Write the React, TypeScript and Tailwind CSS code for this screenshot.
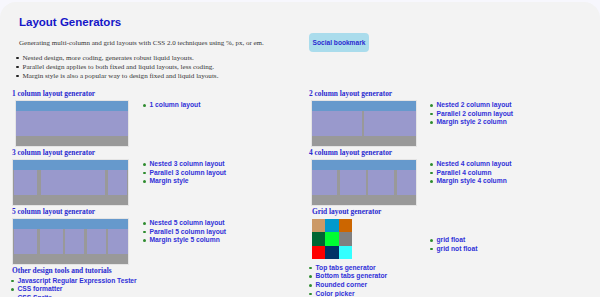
import React from 'react';

const serif = { fontFamily: '"Liberation Serif", "Times New Roman", serif' };
const sans = { fontFamily: '"Liberation Sans", Arial, sans-serif' };

const Bullet: React.FC = () => (
    <span className="inline-block w-[2.5px] h-[2.5px] rounded-full bg-[#2e8b2e] mr-[4px] shrink-0"></span>
);

const LinkList: React.FC<{ items: string[]; className?: string }> = ({ items, className }) => (
    <ul className={`text-[6.7px] font-bold text-[#3030d8] leading-[8.6px] ${className ?? ''}`} style={sans}>
        {items.map((t) => (
            <li key={t} className="flex items-center whitespace-nowrap">
                <Bullet />
                {t}
            </li>
        ))}
    </ul>
);

const Heading: React.FC<{ children: React.ReactNode; className?: string }> = ({ children, className }) => (
    <h3 className={`h-[8px] text-[7.4px] font-bold text-[#2a2ad0] leading-[8px] whitespace-nowrap ${className ?? ''}`} style={serif}>
        {children}
    </h3>
);

// preview of a layout: header, columns, footer
const Preview: React.FC<{ cols: string[]; className?: string }> = ({ cols, className }) => (
    <div className={`flex flex-col shrink-0 bg-[#999999] shadow-[0_0_0_1px_#e4e4e4] ${className ?? ''}`}>
        <div className="h-[10px] bg-[#6699cc]"></div>
        <div className="h-[25px] flex justify-between bg-[#999999]">
            {cols.map((c, i) => (
                <div key={i} className={`h-full bg-[#9999cc] ${c}`}></div>
            ))}
        </div>
        <div className="h-[10px] bg-[#999999]"></div>
    </div>
);

const gridColors = [
    'bg-[#cc9966]', 'bg-[#0099cc]', 'bg-[#cc6600]',
    'bg-[#006633]', 'bg-[#00ff33]', 'bg-[#808080]',
    'bg-[#ff0000]', 'bg-[#003366]', 'bg-[#33ffff]',
];

export default function App() {
    return (
        <div className="w-[600px] h-[297px] overflow-hidden bg-[#f7f7fd]">
            <div className="mt-[2px] h-[295px] rounded-tl-[16px] rounded-tr-[16px] bg-[#f3f3f3] flex pl-[12px]">
                {/* left column */}
                <div className="w-[297px] flex flex-col">
                    <h1 className="ml-[7px] mt-[13px] h-[14px] text-[11.5px] font-bold text-[#1616c8] leading-[14px]" style={sans}>
                        Layout Generators
                    </h1>
                    <p className="ml-[7px] mt-[9.5px] h-[9px] text-[7px] text-[#333333] leading-[9px] whitespace-nowrap" style={serif}>
                        Generating multi-column and grid layouts with CSS 2.0 techniques using %, px, or em.
                    </p>
                    <ul className="ml-[4px] mt-[6px] text-[7.1px] text-[#333333] leading-[9px]" style={serif}>
                        {[
                            'Nested design, more coding, generates robust liquid layouts.',
                            'Parallel design applies to both fixed and liquid layouts, less coding.',
                            'Margin style is also a popular way to design fixed and liquid layouts.',
                        ].map((t) => (
                            <li key={t} className="flex items-center h-[9px] whitespace-nowrap">
                                <span className="inline-block w-[2.5px] h-[2.5px] rounded-full bg-[#222222] mr-[4px]"></span>
                                {t}
                            </li>
                        ))}
                    </ul>

                    <Heading className="mt-[9.5px]">1 column layout generator</Heading>
                    <div className="flex mt-[3px] h-[45px]">
                        <Preview cols={['w-full']} className="ml-[4px] w-[112px]" />
                        <LinkList items={['1 column layout']} className="ml-[15px]" />
                    </div>

                    <Heading className="mt-[3px]">3 column layout generator</Heading>
                    <div className="flex mt-[3px] h-[45px]">
                        <Preview cols={['w-[23px] ml-[1px]', 'w-[64px]', 'w-[19px] mr-[1px]']} className="ml-[1px] w-[115px]" />
                        <LinkList
                            items={['Nested 3 column layout', 'Parallel 3 column layout', 'Margin style']}
                            className="ml-[15px]"
                        />
                    </div>

                    <Heading className="mt-[3px]">5 column layout generator</Heading>
                    <div className="flex mt-[3px] h-[45px]">
                        <Preview
                            cols={['w-[23px] ml-[1px]', 'w-[23px]', 'w-[19px]', 'w-[19px]', 'w-[20px]']}
                            className="ml-[1px] w-[115px]"
                        />
                        <LinkList
                            items={['Nested 5 column layout', 'Parallel 5 column layout', 'Margin style 5 column']}
                            className="ml-[15px]"
                        />
                    </div>

                    <Heading className="mt-[3px]">Other design tools and tutorials</Heading>
                    <LinkList
                        items={['Javascript Regular Expression Tester', 'CSS formatter', 'CSS Sprite']}
                        className="mt-[1.5px] -ml-[1px]"
                    />
                </div>

                {/* right column */}
                <div className="flex-1 flex flex-col">
                    <div className="mt-[31px] w-[60px] h-[19px] shrink-0 rounded-[4px] bg-[#aadcec] flex items-center justify-center">
                        <span className="text-[6.6px] font-bold text-[#2a2ad0] whitespace-nowrap" style={sans}>
                            Social bookmark
                        </span>
                    </div>

                    <Heading className="mt-[38px]">2 column layout generator</Heading>
                    <div className="flex mt-[3px] h-[45px]">
                        <Preview cols={['w-[50px]', 'w-[52px]']} className="ml-[3px] w-[104px]" />
                        <LinkList
                            items={['Nested 2 column layout', 'Parallel 2 column layout', 'Margin style 2 column']}
                            className="ml-[14px]"
                        />
                    </div>

                    <Heading className="mt-[3px]">4 column layout generator</Heading>
                    <div className="flex mt-[3px] h-[45px]">
                        <Preview cols={['w-[25px]', 'w-[26px]', 'w-[26px]', 'w-[19px]']} className="ml-[3px] w-[104px]" />
                        <LinkList
                            items={['Nested 4 column layout', 'Parallel 4 column', 'Margin style 4 column']}
                            className="ml-[14px]"
                        />
                    </div>

                    <Heading className="mt-[3px] ml-[3px]">Grid layout generator</Heading>
                    <div className="flex mt-[3px] h-[40px]">
                        <div className="ml-[3px] grid grid-cols-3 w-[40px] h-[40px] shrink-0">
                            {gridColors.map((c) => (
                                <div key={c} className={c}></div>
                            ))}
                        </div>
                        <LinkList items={['grid float', 'grid not float']} className="ml-[78px] mt-[17px]" />
                    </div>

                    <LinkList
                        items={['Top tabs generator', 'Bottom tabs generator', 'Rounded corner', 'Color picker']}
                        className="mt-[4.5px] leading-[8.7px]"
                    />
                </div>
            </div>
        </div>
    );
}
